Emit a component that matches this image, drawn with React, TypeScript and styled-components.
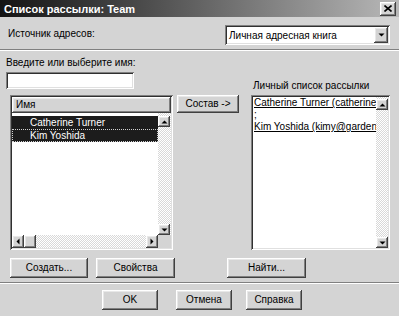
import styled, { createGlobalStyle, css } from "styled-components";

const GlobalStyle = createGlobalStyle`
  html, body {
    margin: 0;
    padding: 0;
    background: #d4d4d4;
  }
`;

const raised = css`
  background: #d4d4d4;
  box-shadow: inset -1px -1px #404040, inset 1px 1px #ffffff,
    inset -2px -2px #808080, inset 2px 2px #e8e8e8;
`;

const sunken = css`
  background: #ffffff;
  box-shadow: inset 1px 1px #808080, inset -1px -1px #ffffff,
    inset 2px 2px #303030, inset -2px -2px #e0e0e0;
`;

const Window = styled.div`
  width: 399px;
  height: 316px;
  background: #d4d4d4;
  display: flex;
  flex-direction: column;
  overflow: hidden;
  font-family: "Liberation Sans", Arial, sans-serif;
  font-size: 10px;
  color: #000;
`;

const TitleBar = styled.div`
  height: 17px;
  display: flex;
  align-items: center;
  justify-content: space-between;
  padding: 0 3px 0 4px;
  background: linear-gradient(90deg, #141414 0%, #4a4a4a 35%, #b8b8b8 100%);
  color: #fff;
  font-weight: bold;
  font-size: 11px;
`;

const CloseButton = styled.div`
  ${raised};
  width: 16px;
  height: 14px;
  display: flex;
  align-items: center;
  justify-content: center;
`;

const SourceRow = styled.div`
  height: 32px;
  box-sizing: border-box;
  padding: 8px 9px 0 8px;
  display: flex;
  align-items: flex-start;
  justify-content: space-between;
`;

const Label = styled.div`
  line-height: 13px;
  margin-top: 2px;
  white-space: nowrap;
`;

const Select = styled.div`
  ${sunken};
  width: 165px;
  height: 20px;
  box-sizing: border-box;
  padding: 2px;
  display: flex;
  align-items: center;
`;

const SelectText = styled.div`
  flex: 1;
  padding-left: 2px;
`;

const ArrowButton = styled.div<{ $w?: number; $h?: number }>`
  ${raised};
  width: ${(p) => p.$w ?? 13}px;
  height: ${(p) => p.$h ?? 13}px;
  flex-shrink: 0;
  display: flex;
  align-items: center;
  justify-content: center;
`;

const Separator = styled.div`
  height: 0;
  border-top: 1px solid #808080;
  border-bottom: 1px solid #ffffff;
`;

const Main = styled.div`
  display: grid;
  grid-template-columns: 171px 74px 140px;
  grid-template-rows: 14px 20px 155px;
  row-gap: 3px;
  padding: 4px 0 0 6px;
`;

const FieldLabel = styled.div<{ $end?: boolean }>`
  line-height: 13px;
  white-space: nowrap;
  align-self: ${(p) => (p.$end ? "end" : "center")};
  padding-left: ${(p) => (p.$end ? 2 : 0)}px;
`;

const TextInput = styled.div`
  ${sunken};
  width: 128px;
  height: 17px;
`;

const ListBox = styled.div`
  ${sunken};
  margin-left: 4px;
  width: 163px;
  box-sizing: border-box;
  padding: 2px;
  display: flex;
  flex-direction: column;
`;

const ColumnHeader = styled.div`
  ${raised};
  height: 16px;
  line-height: 16px;
  padding-left: 4px;
  flex-shrink: 0;
`;

const ListBody = styled.div`
  flex: 1;
  display: grid;
  grid-template-columns: 1fr 13px;
  grid-template-rows: 1fr 13px;
  min-height: 0;
`;

const Rows = styled.div`
  padding-top: 3px;
  overflow: hidden;
`;

const Row = styled.div<{ $focus?: boolean }>`
  height: 13px;
  line-height: 13px;
  padding-left: 18px;
  background: #1c1c1c;
  color: #fff;
  white-space: nowrap;
  box-sizing: border-box;
  outline: ${(p) => (p.$focus ? "1px dotted #d0d0d0" : "none")};
  outline-offset: -1px;
`;

const VScroll = styled.div<{ $top?: number }>`
  display: flex;
  flex-direction: column;
  justify-content: space-between;
  padding-top: ${(p) => p.$top ?? 0}px;
  background: repeating-conic-gradient(#ffffff 0 25%, #d8d8d8 0 50%) 0 0 / 2px 2px;
`;

const HScroll = styled.div`
  display: flex;
  justify-content: space-between;
  background: repeating-conic-gradient(#ffffff 0 25%, #d8d8d8 0 50%) 0 0 / 2px 2px;
`;

const HLeft = styled.div`
  display: flex;
`;

const Corner = styled.div`
  background: #d4d4d4;
`;

const MoveButton = styled.div`
  ${raised};
  grid-column: 2;
  width: 62px;
  height: 18px;
  line-height: 18px;
  text-align: center;
  align-self: start;
`;

const MemberBox = styled.div`
  ${sunken};
  width: 139px;
  box-sizing: border-box;
  padding: 2px;
  display: flex;
`;

const MemberText = styled.div`
  flex: 1;
  min-width: 0;
  overflow: hidden;
  padding-left: 1px;
`;

const MemberLine = styled.div<{ $link?: boolean }>`
  line-height: 12px;
  white-space: nowrap;
  text-decoration: ${(p) => (p.$link ? "underline" : "none")};
`;

const ButtonRow = styled.div`
  display: flex;
  gap: 8px;
  padding-left: 10px;
  margin-top: 8px;
`;

const Button = styled.div<{ $w?: number; $ml?: number }>`
  ${raised};
  width: ${(p) => p.$w ?? 79}px;
  height: 20px;
  line-height: 20px;
  text-align: center;
  margin-left: ${(p) => p.$ml ?? 0}px;
  flex-shrink: 0;
`;

const FooterSeparator = styled(Separator)`
  margin-top: 4px;
`;

const Footer = styled.div`
  display: flex;
  padding-left: 102px;
  margin-top: 6px;
`;

const Arrow = ({ dir }: { dir: "up" | "down" | "left" | "right" }) => {
  const pts = {
    up: "0.5,4.5 3.5,1.5 6.5,4.5",
    down: "0.5,1.5 3.5,4.5 6.5,1.5",
    left: "4.5,0.5 1.5,3.5 4.5,6.5",
    right: "1.5,0.5 4.5,3.5 1.5,6.5",
  }[dir];
  const vertical = dir === "up" || dir === "down";
  return (
    <svg width={vertical ? 7 : 6} height={vertical ? 6 : 7} viewBox={vertical ? "0 0 7 6" : "0 0 6 7"}>
      <polygon points={pts} fill="#000" />
    </svg>
  );
};

export default function App() {
  return (
    <Window>
      <GlobalStyle />
      <TitleBar>
        <span>Список рассылки: Team</span>
        <CloseButton>
          <svg width="8" height="7" viewBox="0 0 8 7">
            <path d="M0.5 0.5 L7.5 6.5 M7.5 0.5 L0.5 6.5" stroke="#000" strokeWidth="1.6" />
          </svg>
        </CloseButton>
      </TitleBar>

      <SourceRow>
        <Label>Источник адресов:</Label>
        <Select>
          <SelectText>Личная адресная книга</SelectText>
          <ArrowButton $w={14} $h={16}>
            <Arrow dir="down" />
          </ArrowButton>
        </Select>
      </SourceRow>
      <Separator />

      <Main>
        <FieldLabel>Введите или выберите имя:</FieldLabel>
        <div />
        <div />
        <TextInput />
        <div />
        <FieldLabel $end>Личный список рассылки</FieldLabel>

        <ListBox>
          <ColumnHeader>Имя</ColumnHeader>
          <ListBody>
            <Rows>
              <Row>Catherine Turner</Row>
              <Row $focus>Kim Yoshida</Row>
            </Rows>
            <VScroll $top={3}>
              <ArrowButton $w={12} $h={11}>
                <Arrow dir="up" />
              </ArrowButton>
              <ArrowButton $w={12} $h={11}>
                <Arrow dir="down" />
              </ArrowButton>
            </VScroll>
            <HScroll>
              <HLeft>
                <ArrowButton $w={12} $h={13}>
                  <Arrow dir="left" />
                </ArrowButton>
                <ArrowButton $w={12} $h={13} />
              </HLeft>
              <ArrowButton $w={12} $h={13}>
                <Arrow dir="right" />
              </ArrowButton>
            </HScroll>
            <Corner />
          </ListBody>
        </ListBox>

        <MoveButton>Состав -&gt;</MoveButton>

        <MemberBox>
          <MemberText>
            <MemberLine $link>Catherine Turner (catherinet@gardenco.msn.com)</MemberLine>
            <MemberLine>;</MemberLine>
            <MemberLine $link>Kim Yoshida (kimy@gardenco.msn.com)</MemberLine>
          </MemberText>
          <VScroll $top={2}>
            <ArrowButton $w={12} $h={11}>
              <Arrow dir="up" />
            </ArrowButton>
            <ArrowButton $w={12} $h={11}>
              <Arrow dir="down" />
            </ArrowButton>
          </VScroll>
        </MemberBox>
      </Main>

      <ButtonRow>
        <Button $w={78}>Создать...</Button>
        <Button>Свойства</Button>
        <Button $ml={44}>Найти...</Button>
      </ButtonRow>
      <FooterSeparator />
      <Footer>
        <Button $w={56}>OK</Button>
        <Button $w={56} $ml={18}>Отмена</Button>
        <Button $w={56} $ml={14}>Справка</Button>
      </Footer>
    </Window>
  );
}
